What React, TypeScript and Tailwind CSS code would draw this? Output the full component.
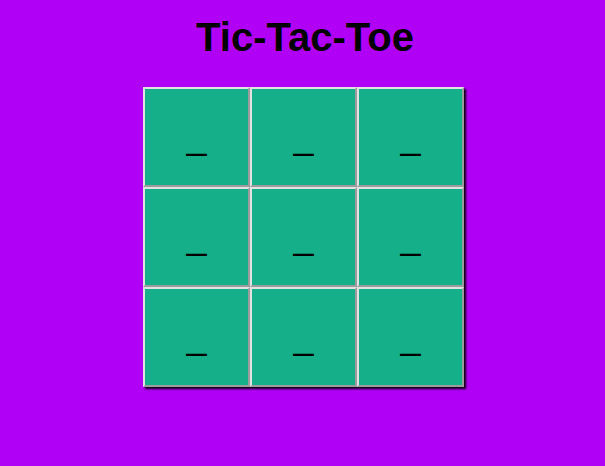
import { useState } from 'react'

type Cell = 'X' | 'O' | null

export default function App() {
  const [cells, setCells] = useState<Cell[]>(Array(9).fill(null))
  const [turn, setTurn]   = useState<'X' | 'O'>('X')

  function play(i: number) {
    if (cells[i]) return
    const next = cells.slice()
    next[i] = turn
    setCells(next)
    setTurn(turn === 'X' ? 'O' : 'X')
  }

  return (
    <div className="min-h-[466px] bg-[#b000f6] font-['Liberation_Sans',Arial,sans-serif]">
      <h1 className="pt-[15px] pl-[5px] text-center text-[40px] leading-[45px] font-bold text-black">
        Tic-Tac-Toe
      </h1>

      {/* Plateau */}
      <div className="flex justify-center pl-[2px] mt-[27px]">
        <div className="grid grid-cols-[repeat(3,107px)] grid-rows-[repeat(3,100px)] shadow-[2px_2px_2px_rgba(0,0,0,0.95)]">
          {cells.map((c, i) => (
            <button
              key={i}
              onClick={() => play(i)}
              className="flex items-center justify-center bg-[#15b089] border-2 border-t-[#e2e2e2] border-l-[#e2e2e2] border-r-[#9c9c9c] border-b-[#9c9c9c] text-[36px] leading-none text-black"
            >
              {c ?? '_'}
            </button>
          ))}
        </div>
      </div>
    </div>
  )
}
